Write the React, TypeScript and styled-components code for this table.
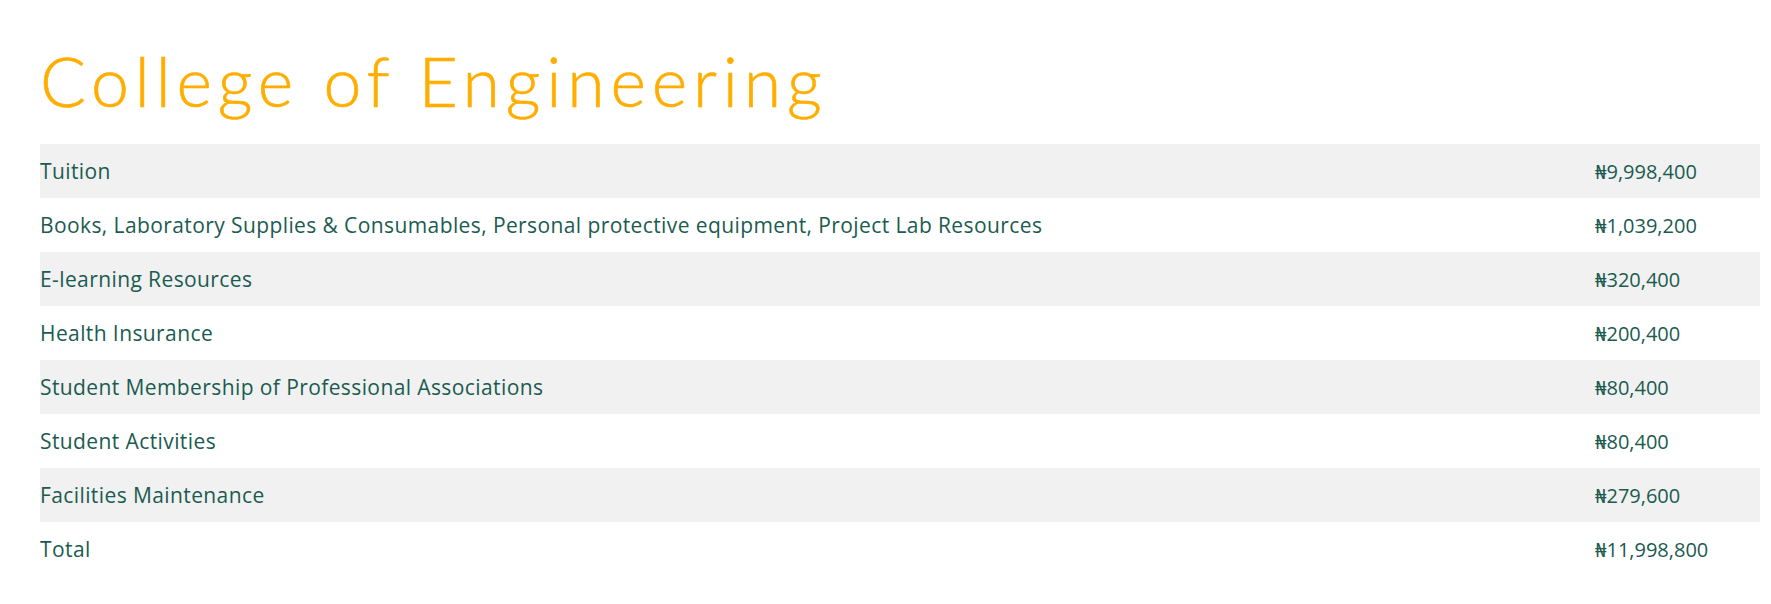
import React from "react";
import styled, { createGlobalStyle } from "styled-components";

const GlobalStyle = createGlobalStyle`
  html, body {
    margin: 0;
    padding: 0;
    background: #ffffff;
  }
  body {
    font-family: "Lato", "Noto Sans", sans-serif;
  }
`;

const Page = styled.main`
  display: flex;
  flex-direction: column;
  padding: 40px 11px 28px 40px;
`;

const Title = styled.h1`
  margin: 0 0 22px 0;
  font-family: "Lato", sans-serif;
  font-weight: 300;
  font-size: 68px;
  line-height: 82px;
  color: #ffae00;
  letter-spacing: 5.8px;
  -webkit-text-stroke: 0.6px #ffae00;
`;

const Table = styled.div`
  display: flex;
  flex-direction: column;
`;

const Row = styled.div<{ $shaded: boolean }>`
  display: grid;
  grid-template-columns: 1fr 165px;
  align-items: center;
  height: 54px;
  background: ${(p) => (p.$shaded ? "#f1f1f1" : "transparent")};
`;

const Cell = styled.span`
  font-family: "Open Sans", "Noto Sans", sans-serif;
  font-size: 21px;
  letter-spacing: 0.4px;
  color: #1b5b50;
  white-space: nowrap;
`;

const Amount = styled(Cell)`
  font-size: 20px;
  letter-spacing: 0;
  font-family: "Open Sans", "Noto Sans", "DejaVu Serif", serif;
`;

const rows: [string, string][] = [
  ["Tuition", "₦9,998,400"],
  [
    "Books, Laboratory Supplies & Consumables, Personal protective equipment, Project Lab Resources",
    "₦1,039,200",
  ],
  ["E-learning Resources", "₦320,400"],
  ["Health Insurance", "₦200,400"],
  ["Student Membership of Professional Associations", "₦80,400"],
  ["Student Activities", "₦80,400"],
  ["Facilities Maintenance", "₦279,600"],
  ["Total", "₦11,998,800"],
];

export default function App() {
  return (
    <>
      <GlobalStyle />
      <Page>
        <Title>College of Engineering</Title>
        <Table>
          {rows.map(([label, amount], i) => (
            <Row key={label} $shaded={i % 2 === 0}>
              <Cell>{label}</Cell>
              <Amount>{amount}</Amount>
            </Row>
          ))}
        </Table>
      </Page>
    </>
  );
}
